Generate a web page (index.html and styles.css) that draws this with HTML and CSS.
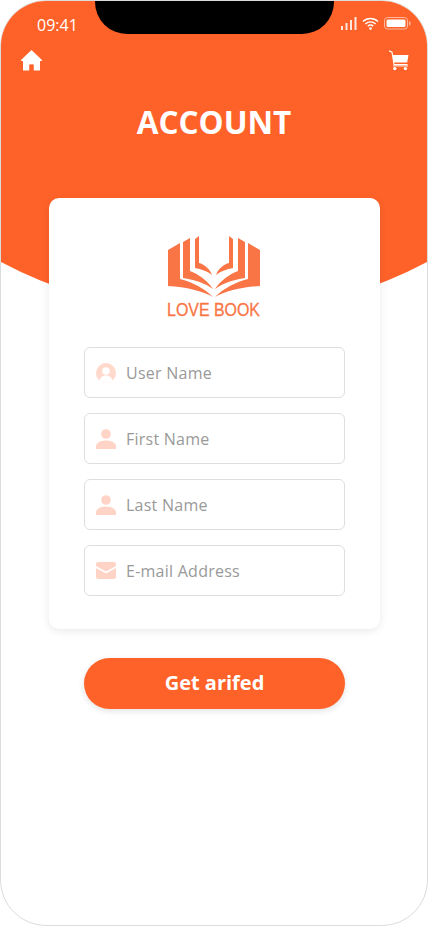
FILE: index.html
```html
<!DOCTYPE html>
<html lang="en">
<head>
<meta charset="utf-8">
<title>Account</title>
<link rel="stylesheet" href="styles.css">
</head>
<body>
<div class="phone">
  <div class="hero-bg"></div>
  <div class="notch"></div>
  <div class="content">
    <div class="status">
      <span class="time">09:41</span>
      <div class="status-icons">
        <svg class="signal" width="16" height="13" viewBox="0 0 16 13"><rect x="0" y="9" width="2" height="4"/><rect x="4.5" y="6" width="2" height="7"/><rect x="9" y="3" width="2" height="10"/><rect x="13.5" y="0" width="2" height="13"/></svg>
        <svg class="wifi" width="17" height="13" viewBox="0 0 17 13"><path d="M1 4.6a10.6 10.6 0 0 1 15 0M3.4 7a7.2 7.2 0 0 1 10.2 0M5.8 9.2a3.8 3.8 0 0 1 5.4 0" fill="none" stroke="#fff" stroke-width="1.4"/><circle cx="8.5" cy="11.6" r="1.3" fill="#fff"/></svg>
        <svg class="battery" width="27" height="13" viewBox="0 0 27 13"><rect x=".5" y=".5" width="23" height="11.5" rx="3" fill="none" stroke="#fff" stroke-opacity=".55"/><rect x="2.5" y="2.5" width="19" height="7.5" rx="1.5" fill="#fff"/><rect x="25" y="4.5" width="1.5" height="4" rx=".7" fill="#fff" fill-opacity=".55"/></svg>
      </div>
    </div>
    <div class="nav">
      <svg width="23" height="21" viewBox="0 0 23 21"><path d="M11.5 0 22.5 10.6 20 11.3V20.5H13.7V14.5H9.3V20.5H3V11.3L.5 10.6Z" fill="#fff"/><rect x="9.6" y="14.5" width="3.8" height="6" fill="#ff6229" fill-opacity=".55"/></svg>
      <svg width="21" height="21" viewBox="0 0 21 21"><path d="M1 .8 4 2.2 6 14.5H19.5" fill="none" stroke="#fff" stroke-width="1.1"/><path d="M4.6 5H20.5L19.2 12.6H5.8Z" fill="#fff"/><circle cx="6.8" cy="18.6" r="1.7" fill="#fff"/><circle cx="17.4" cy="18.6" r="1.7" fill="#fff"/><rect x="5" y="15.4" width="15" height="1" fill="#fff"/></svg>
    </div>
    <h1 class="title">ACCOUNT</h1>
    <section class="card">
      <div class="logo">
        <svg class="logo-mark" width="92" height="66" viewBox="0 0 92 66">
          <path class="logo-shape" d="M0 14 12 7V43C24 46 36 52 45 61 35 55 18 51 0 50Z"/>
          <path class="logo-shape" d="M15 6 22 2V35C30 38 39 44 45 53 37 47 27 44 15 42Z"/>
          <path class="logo-shape" d="M27 3 31 0V27C36 28 42 33 44 39 39 35 33 33 27 32Z"/>
          <path class="logo-shape" d="M92 14 80 7V43C68 46 56 52 47 61 57 55 74 51 92 50Z"/>
          <path class="logo-shape" d="M77 6 70 2V35C62 38 53 44 47 53 55 47 65 44 77 42Z"/>
          <path class="logo-shape" d="M65 3 61 0V27C56 28 50 33 48 39 53 35 59 33 65 32Z"/>
        </svg>
        <span class="logo-text">LOVE BOOK</span>
      </div>
      <form class="fields">
        <label class="field">
          <svg width="20" height="20" viewBox="0 0 20 20"><circle cx="10" cy="10" r="10" fill="#ffd9cc"/><circle cx="10" cy="8" r="3.8" fill="#fff"/><path d="M3.5 17.5C4.5 13.8 7 12.4 10 12.4S15.5 13.8 16.5 17.5A10 10 0 0 1 3.5 17.5Z" fill="#fff"/></svg>
          <span class="placeholder">User Name</span>
        </label>
        <label class="field">
          <svg width="20" height="20" viewBox="0 0 20 20"><circle cx="10" cy="5" r="4.8" fill="#ffd4c6"/><path d="M0 20V17.5C0 13.5 5 11.5 10 11.5S20 13.5 20 17.5V20Z" fill="#ffd4c6"/></svg>
          <span class="placeholder">First Name</span>
        </label>
        <label class="field">
          <svg width="20" height="20" viewBox="0 0 20 20"><circle cx="10" cy="5" r="4.8" fill="#ffd4c6"/><path d="M0 20V17.5C0 13.5 5 11.5 10 11.5S20 13.5 20 17.5V20Z" fill="#ffd4c6"/></svg>
          <span class="placeholder">Last Name</span>
        </label>
        <label class="field">
          <svg width="20" height="17" viewBox="0 0 20 17"><path d="M2 0H18A2 2 0 0 1 20 2V4L10 9.5 0 4V2A2 2 0 0 1 2 0Z" fill="#ffd4c6"/><path d="M0 6 10 11.5 20 6V15A2 2 0 0 1 18 17H2A2 2 0 0 1 0 15Z" fill="#ffd4c6"/></svg>
          <span class="placeholder">E-mail Address</span>
        </label>
      </form>
    </section>
    <button class="cta" type="button">Get arifed</button>
  </div>
</div>
</body>
</html>
```
FILE: styles.css
```css
* { box-sizing: border-box; }
html, body { margin: 0; padding: 0; background: #fff; }
body { font-family: "Open Sans", "Noto Sans", "Liberation Sans", sans-serif; }

.phone {
  position: relative;
  width: 428px;
  height: 926px;
  overflow: hidden;
  background: #fff;
  border-radius: 46px;
  border: 1px solid #dcdcdc;
}
.hero-bg {
  position: absolute;
  left: 0;
  top: 0;
  width: 100%;
  height: 320px;
  background: #ff6229;
  clip-path: circle(455px at 50% -141px);
}
.notch {
  position: absolute;
  left: 94px;
  top: -1px;
  width: 239px;
  height: 34px;
  background: #000;
  border-radius: 0 0 32px 32px;
}
.content {
  position: relative;
  display: flex;
  flex-direction: column;
  height: 100%;
}
.status {
  display: flex;
  justify-content: space-between;
  align-items: center;
  height: 20px;
  margin-top: 14px;
  padding: 0 16px 0 36px;
}
.time { color: #fff; font-size: 16px; line-height: 20px; }
.status-icons { display: flex; align-items: center; gap: 5px; margin-top: -3px; }
.signal { fill: #fff; fill-opacity: .85; }
.nav {
  display: flex;
  justify-content: space-between;
  align-items: center;
  margin-top: 15px;
  padding: 0 18px 0 19px;
}
.title {
  margin: 29px 0 0;
  text-align: center;
  color: #fff;
  font-size: 31.5px;
  line-height: 44px;
  font-weight: 700;
}
.card {
  width: 331px;
  height: 431px;
  margin: 54px 0 0 48px;
  padding: 38px 35px 0;
  background: #fff;
  border-radius: 10px;
  box-shadow: 0 2px 8px rgba(0, 0, 0, .09);
}
.logo {
  display: flex;
  flex-direction: column;
  align-items: center;
  height: 82px;
}
.logo-mark { margin-right: 1px; }
.logo-shape { fill: #f97545; }
.logo-text {
  margin: 1px 1px 0 0;
  color: #f97545;
  font-family: "Liberation Sans", sans-serif;
  font-size: 18px;
  line-height: 15px;
  white-space: nowrap;
  transform: scaleX(.885);
  -webkit-text-stroke: .3px #f97545;
}
.fields {
  display: flex;
  flex-direction: column;
  gap: 15px;
  margin-top: 29px;
}
.field {
  display: flex;
  align-items: center;
  gap: 10px;
  height: 51px;
  padding-left: 11px;
  border: 1px solid #dedede;
  border-radius: 6px;
  background: #fff;
}
.placeholder { color: #999; font-size: 16px; letter-spacing: .25px; }
.cta {
  width: 261px;
  height: 51px;
  margin: 29px 0 0 83px;
  padding: 0 0 3px;
  border: 0;
  border-radius: 26px;
  background: #ff6229;
  color: #fff;
  font-family: inherit;
  font-size: 20px;
  font-weight: 700;
  box-shadow: 0 2px 6px rgba(0, 0, 0, .12);
}
```
